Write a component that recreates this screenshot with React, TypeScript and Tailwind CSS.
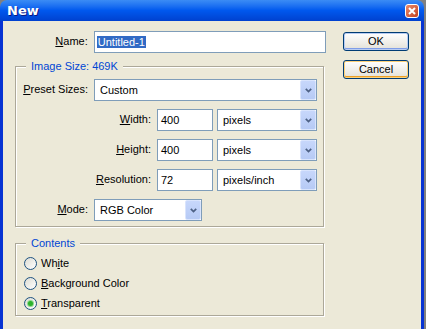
import React from "react";

function Chevron() {
  return (
    <svg width="7" height="5" viewBox="0 0 7 5">
      <path d="M0.8 0.8 L3.5 3.6 L6.2 0.8" stroke="#4D6185" strokeWidth="1.7" fill="none" />
    </svg>
  );
}

function Select({ value, w }: { value: string; w: string }) {
  return (
    <div className={`${w} h-[22px] border border-[#7F9DB9] bg-white flex items-stretch`}>
      <span className="flex-1 pl-[5px] flex items-center">{value}</span>
      <div className="w-[16px] rounded-[2px] bg-gradient-to-b from-[#C7D7FB] to-[#B6CAF5] border border-[#D9E4FD] flex items-center justify-center">
        <Chevron />
      </div>
    </div>
  );
}

function TextBox({ value, w }: { value: string; w: string }) {
  return (
    <div className={`${w} h-[22px] border border-[#7F9DB9] bg-white flex items-center pl-[3px]`}>
      {value}
    </div>
  );
}

function Radio({ checked, children }: { checked?: boolean; children: React.ReactNode }) {
  return (
    <div className="flex items-center gap-[4px] h-[13px]">
      <div className="w-[13px] h-[13px] rounded-full border border-[#1C5180] bg-gradient-to-br from-[#DCDCD3] to-white flex items-center justify-center">
        {checked && <div className="w-[5px] h-[5px] rounded-full bg-[#2DB22D] shadow-[0_0_0_1px_#8FD88F]" />}
      </div>
      <span className="leading-[13px]">{children}</span>
    </div>
  );
}

function Group({ title, children, className }: { title: string; children: React.ReactNode; className: string }) {
  return (
    <div className={`relative w-[309px] border border-[#ACA899] shadow-[inset_1px_1px_0_#fff,1px_1px_0_#fff] ${className}`}>
      <span className="absolute left-[10px] -top-[7px] px-[5px] bg-[#ECE9D8] text-[#0046D5] leading-[13px]">
        {title}
      </span>
      {children}
    </div>
  );
}

export default function App() {
  return (
    <div className="w-[426px] h-[329px] bg-[#808080] overflow-hidden font-['Liberation_Sans',Arial,sans-serif] text-[11px] text-black">
      <div className="w-[424px] h-full flex flex-col">
        {/* Title bar */}
        <div className="h-[21px] shrink-0 rounded-t-[7px] bg-gradient-to-b from-[#3B8CF5] via-[#0058EE] to-[#0041CF] flex items-start pl-[7px] pr-[5px]">
          <span className="mt-[3px] leading-[15px] font-['DejaVu_Sans',sans-serif] font-bold text-[13px] text-white [text-shadow:1px_1px_0_#0A1883]">
            New
          </span>
          <div className="ml-auto mt-[4px] w-[14px] h-[14px] rounded-[3px] border border-white bg-gradient-to-br from-[#E9896A] to-[#C4401C] flex items-center justify-center">
            <svg width="8" height="8" viewBox="0 0 8 8">
              <path d="M1 1 L7 7 M7 1 L1 7" stroke="#fff" strokeWidth="2" />
            </svg>
          </div>
        </div>

        {/* Body */}
        <div className="flex-1 bg-[#ECE9D8] border-l-[3px] border-r-[3px] border-[#0733D3] flex pl-[12px] pt-[10px]">
          <div className="w-[311px]">
            {/* Name */}
            <div className="flex items-center">
              <span className="w-[79px] text-right pr-[6px] pb-[2px]">
                <span className="underline">N</span>ame:
              </span>
              <div className="w-[233px] h-[22px] border border-[#7F9DB9] bg-white flex items-center pl-[2px]">
                <span className="bg-[#316AC5] text-white leading-[12px] px-[1px]">Untitled-1</span>
              </div>
            </div>

            <Group title="Image Size: 469K" className="mt-[13px] pt-[12px] pb-[5px]">
              <div className="flex flex-col gap-[8px]">
                <div className="flex items-center">
                  <span className="w-[78px] text-right pr-[6px] pb-[2px]">
                    <span className="underline">P</span>reset Sizes:
                  </span>
                  <Select value="Custom" w="w-[223px]" />
                </div>
                <div className="flex items-center">
                  <span className="w-[141px] text-right pr-[6px] pb-[2px]">
                    <span className="underline">W</span>idth:
                  </span>
                  <TextBox value="400" w="w-[56px]" />
                  <div className="ml-[4px]">
                    <Select value="pixels" w="w-[100px]" />
                  </div>
                </div>
                <div className="flex items-center">
                  <span className="w-[141px] text-right pr-[6px] pb-[2px]">
                    <span className="underline">H</span>eight:
                  </span>
                  <TextBox value="400" w="w-[56px]" />
                  <div className="ml-[4px]">
                    <Select value="pixels" w="w-[100px]" />
                  </div>
                </div>
                <div className="flex items-center">
                  <span className="w-[141px] text-right pr-[6px] pb-[2px]">
                    <span className="underline">R</span>esolution:
                  </span>
                  <TextBox value="72" w="w-[56px]" />
                  <div className="ml-[4px]">
                    <Select value="pixels/inch" w="w-[100px]" />
                  </div>
                </div>
                <div className="flex items-center">
                  <span className="w-[78px] text-right pr-[6px] pb-[2px]">
                    <span className="underline">M</span>ode:
                  </span>
                  <Select value="RGB Color" w="w-[108px]" />
                </div>
              </div>
            </Group>

            <Group title="Contents" className="mt-[16px] pt-[13px] pb-[5px] pl-[8px]">
              <div className="flex flex-col gap-[7px]">
                <Radio>
                  Wh<span className="underline">i</span>te
                </Radio>
                <Radio>
                  <span className="underline">B</span>ackground Color
                </Radio>
                <Radio checked>
                  <span className="underline">T</span>ransparent
                </Radio>
              </div>
            </Group>
          </div>

          {/* Buttons */}
          <div className="ml-[17px] pt-[1px] flex flex-col gap-[9px]">
            <button className="w-[66px] h-[19px] rounded-[3px] border border-[#003C74] bg-gradient-to-b from-white to-[#E3E1D8] shadow-[inset_0_0_0_1px_#B8CCF2,inset_0_-1px_0_1px_#7F9DE8] flex items-center justify-center">
              OK
            </button>
            <button className="w-[66px] h-[19px] rounded-[3px] border border-[#003C74] bg-gradient-to-b from-white to-[#E3E1D8] shadow-[inset_0_0_0_1px_#FCD17A,inset_0_-1px_0_1px_#EBA026] flex items-center justify-center">
              Cancel
            </button>
          </div>
        </div>
      </div>
    </div>
  );
}
